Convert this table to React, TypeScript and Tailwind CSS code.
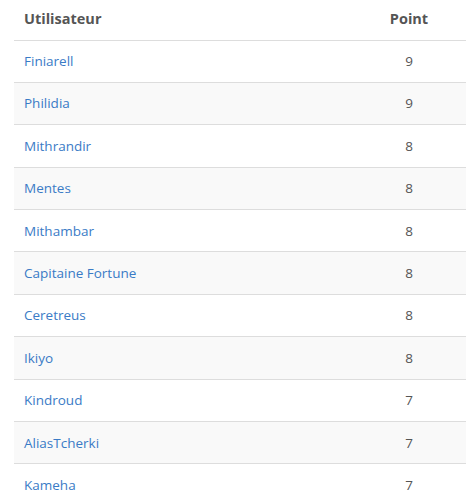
const rows: { name: string; point: number }[] = [
  { name: 'Finiarell', point: 9 },
  { name: 'Philidia', point: 9 },
  { name: 'Mithrandir', point: 8 },
  { name: 'Mentes', point: 8 },
  { name: 'Mithambar', point: 8 },
  { name: 'Capitaine Fortune', point: 8 },
  { name: 'Ceretreus', point: 8 },
  { name: 'Ikiyo', point: 8 },
  { name: 'Kindroud', point: 7 },
  { name: 'AliasTcherki', point: 7 },
  { name: 'Kameha', point: 7 },
];

export default function App() {
  return (
    <div className="bg-white pl-[14px] font-['Open_Sans',sans-serif] text-[13.5px] text-[#555]">
      <table className="w-full border-collapse">
        <thead>
          <tr className="border-b border-[#ddd]">
            <th className="h-[40px] px-[10px] pb-[2px] text-left text-[14.5px] font-bold">Utilisateur</th>
            <th className="h-[40px] w-[114px] pb-[2px] text-center text-[14.5px] font-bold">Point</th>
          </tr>
        </thead>
        <tbody>
          {rows.map((row, i) => (
            <tr key={row.name} className={`border-b border-[#ddd] ${i % 2 === 1 ? 'bg-[#f9f9f9]' : 'bg-white'}`}>
              <td className="h-[42.4px] px-[10px]">
                <a href="#" className="text-[#3a7bc6]">{row.name}</a>
              </td>
              <td className="h-[42.4px] text-center">{row.point}</td>
            </tr>
          ))}
        </tbody>
      </table>
    </div>
  );
}
